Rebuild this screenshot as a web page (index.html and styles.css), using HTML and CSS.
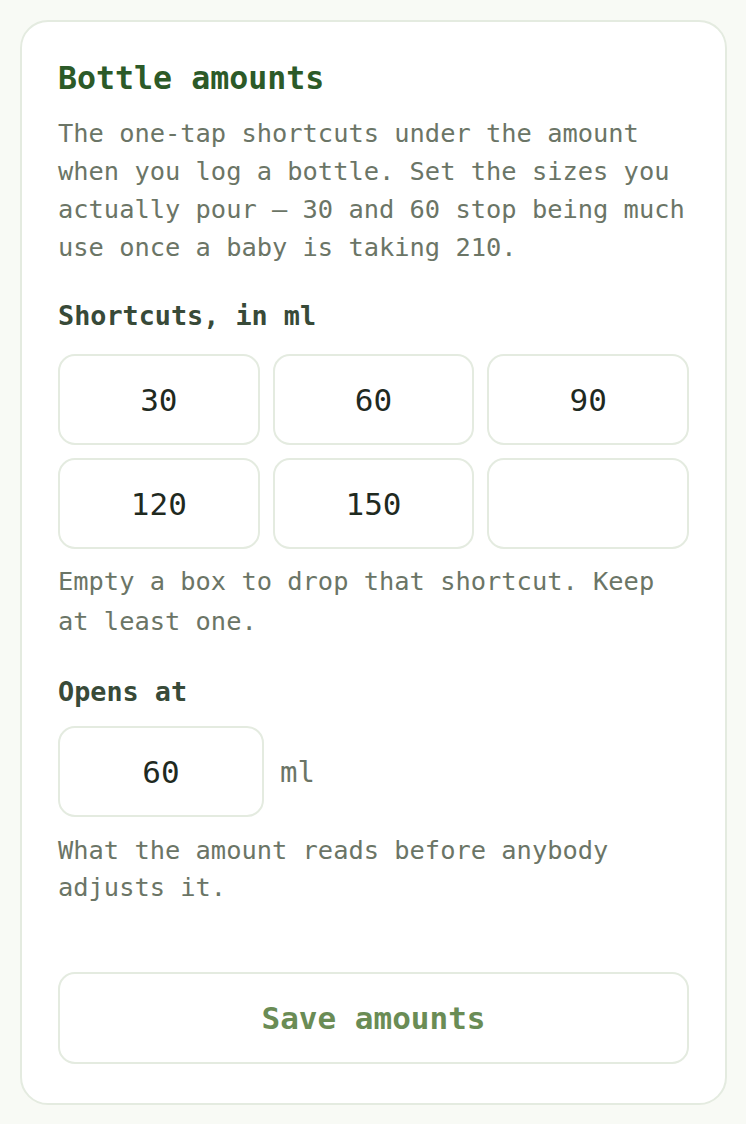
FILE: index.html
```html
<!DOCTYPE html>
<html lang="en">
<head>
<meta charset="utf-8">
<title>Bottle amounts</title>
<link rel="stylesheet" href="styles.css">
</head>
<body>
<main class="page">
  <section class="card">
    <h1 class="title">Bottle amounts</h1>
    <p class="lead">The one-tap shortcuts under the amount when you log a bottle. Set the sizes you actually pour — 30 and 60 stop being much use once a baby is taking 210.</p>

    <div class="label label-shortcuts">Shortcuts, in ml</div>
    <div class="grid">
      <div class="box">30</div>
      <div class="box">60</div>
      <div class="box">90</div>
      <div class="box">120</div>
      <div class="box">150</div>
      <div class="box"></div>
    </div>
    <p class="hint hint-grid">Empty a box to drop that shortcut. Keep at least one.</p>

    <div class="label label-opens">Opens at</div>
    <div class="opens-row">
      <div class="box box-single">60</div>
      <span class="unit">ml</span>
    </div>
    <p class="hint hint-opens">What the amount reads before anybody adjusts it.</p>

    <button class="save" type="button">Save amounts</button>
  </section>
</main>
</body>
</html>
```

FILE: styles.css
```css
* { box-sizing: border-box; }

html, body {
  margin: 0;
  padding: 0;
  background: #f8faf5;
}

body {
  font-family: "DejaVu Sans Mono", "Liberation Mono", monospace;
  color: #1f2a1f;
}

.page {
  padding: 20px;
}

.card {
  width: 707px;
  background: #ffffff;
  border: 2px solid #e4ebe0;
  border-radius: 28px;
  padding: 36px 36px 39px 36px;
}

.title {
  margin: 0;
  font-size: 31.6px;
  line-height: 40px;
  font-weight: bold;
  color: #2c5a28;
  letter-spacing: 0;
}

.lead {
  margin: 16px 0 0 0;
  font-size: 25.4px;
  line-height: 38px;
  color: #6b7566;
}

.label {
  font-size: 26.8px;
  line-height: 38px;
  font-weight: bold;
  color: #384a38;
}

.label-shortcuts { margin-top: 31px; }
.label-opens { margin-top: 32px; }

.grid {
  margin-top: 19px;
  display: grid;
  grid-template-columns: repeat(3, 1fr);
  gap: 13px 13px;
}

.box {
  height: 91px;
  border: 2px solid #e4ebe0;
  border-radius: 17px;
  display: flex;
  align-items: center;
  justify-content: center;
  font-size: 31px;
  color: #1f2a1f;
  background: #ffffff;
}

.hint {
  margin: 0;
  font-size: 25.4px;
  color: #6b7566;
}

.hint-grid {
  margin-top: 12px;
  line-height: 40px;
}

.opens-row {
  margin-top: 15px;
  display: flex;
  align-items: center;
  gap: 16px;
}

.box-single {
  width: 206px;
}

.unit {
  font-size: 29px;
  color: #6b7566;
}

.hint-opens {
  margin-top: 15px;
  line-height: 37px;
}

.save {
  display: block;
  width: 100%;
  height: 92px;
  margin-top: 66px;
  background: #ffffff;
  border: 2px solid #e4ebe0;
  border-radius: 17px;
  font-family: "DejaVu Sans Mono", "Liberation Mono", monospace;
  font-size: 31px;
  font-weight: bold;
  color: #6a8c55;
  cursor: pointer;
}
```
